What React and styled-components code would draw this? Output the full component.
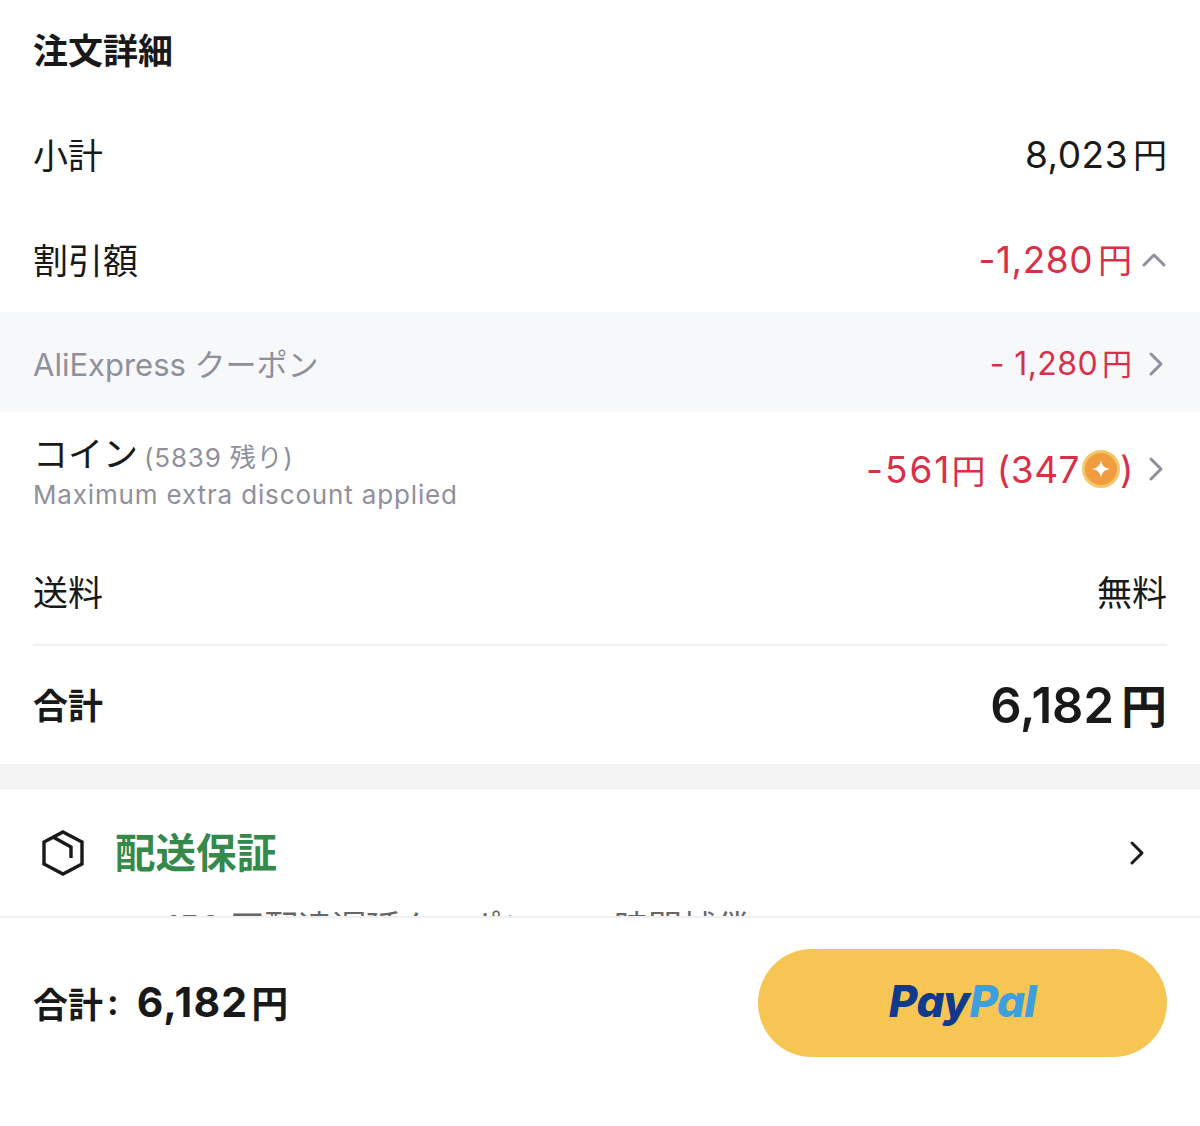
import React from "react";
import styled, { createGlobalStyle } from "styled-components";

const GlobalStyle = createGlobalStyle`
  html, body {
    margin: 0;
    padding: 0;
    background: #fff;
  }
  * {
    box-sizing: border-box;
  }
`;

const Page = styled.div`
  width: 1200px;
  height: 1126px;
  display: flex;
  flex-direction: column;
  overflow: hidden;
  background: #fff;
  color: #191919;
  font-family: Inter, "Noto Sans CJK JP", sans-serif;
`;
const Scroll = styled.div`
  height: 916px;
  overflow: hidden;
  flex: none;
`;
const Title = styled.h2`
  margin: 0;
  height: 103px;
  padding: 0 33px 6px;
  display: flex;
  align-items: center;
  font-size: 35px;
  font-weight: 700;
`;
const Row = styled.div`
  height: ${(p) => p.$h}px;
  padding: 0 33px 4px;
  display: flex;
  align-items: center;
  justify-content: space-between;
  font-size: 35px;
`;
const SubRow = styled(Row)`
  background: ${(p) => (p.$shaded ? "#f7f8fa" : "#fff")};
  color: #8f909c;
  font-size: 31px;
  padding-bottom: 0;
`;
const Value = styled.div`
  display: flex;
  align-items: center;
  gap: 9px;
  color: ${(p) => (p.$red ? "#d9304a" : "inherit")};
`;
const Digits = styled.span`
  font-size: 37px;
  letter-spacing: 0.5px;
`;
const SubDigits = styled.span`
  font-size: 32px;
  letter-spacing: 0.4px;
`;
const Yen = styled.span`
  font-size: ${(p) => p.$size || 34}px;
  margin-left: ${(p) => p.$gap ?? 5}px;
`;
const CoinAmount = styled.div`
  display: flex;
  align-items: center;
  font-size: 37px;
  letter-spacing: 0.5px;
`;
const CoinDigits = styled.span`
  letter-spacing: 2px;
`;
const CoinValue = styled(Value)`
  margin-bottom: 14px;
  gap: 7px;
`;
const Stack = styled.div`
  display: flex;
  flex-direction: column;
  margin-bottom: 7px;
`;
const CoinName = styled.div`
  color: #191919;
  font-size: 35px;
  line-height: 40px;
`;
const CoinLeft = styled.span`
  color: #8f909c;
  font-size: 26px;
  margin-left: 6px;
  letter-spacing: 0.8px;
`;
const Hint = styled.div`
  color: #8f909c;
  font-size: 26px;
  line-height: 34px;
  letter-spacing: 0.85px;
`;
const Coin = styled.span`
  display: inline-flex;
  align-items: center;
  justify-content: center;
  width: 38px;
  height: 38px;
  margin-left: 2px;
  border-radius: 50%;
  background: #f19c3f;
  border: 3px solid #f3c869;
`;
const Divider = styled.div`
  height: 2px;
  margin: 0 33px;
  background: #f0f0f0;
`;
const TotalRow = styled(Row)`
  font-weight: 700;
`;
const TotalLabel = styled.span`
  font-size: 35px;
`;
const TotalValue = styled.span`
  font-size: 49px;
  font-weight: 600;
`;
const Band = styled.div`
  height: 25px;
  background: #f4f4f4;
  border-bottom: 1px solid #eee;
`;
const Guarantee = styled.div`
  height: 119px;
  padding: 9px 52px 0 41px;
  display: flex;
  align-items: center;
  gap: 30px;
`;
const GuaranteeTitle = styled.span`
  flex: 1;
  padding-bottom: 6px;
  color: #34894b;
  font-size: 40.5px;
  font-weight: 700;
`;
const Clipped = styled.div`
  padding-left: 165px;
  font-size: 34px;
  line-height: 40px;
  color: #666;
  white-space: nowrap;
`;
const ClippedTail = styled.span`
  margin-left: 46px;
`;
const Footer = styled.div`
  flex: 1;
  border-top: 2px solid #f0f0f0;
  padding: 31px 33px 0;
  display: flex;
  align-items: flex-start;
  justify-content: space-between;
`;
const FooterTotal = styled.div`
  height: 106px;
  display: flex;
  align-items: center;
  font-size: 35px;
  font-weight: 700;
`;
const Colon = styled.span`
  margin-left: 4px;
`;
const FooterDigits = styled.span`
  font-size: 41px;
  margin-left: 18px;
  letter-spacing: 1.2px;
`;
const PayButton = styled.button`
  width: 409px;
  height: 108px;
  padding: 0 0 4px;
  border: none;
  border-radius: 54px;
  background: #f6c554;
  display: flex;
  align-items: center;
  justify-content: center;
  font-family: Inter, sans-serif;
  font-size: 44px;
  font-weight: 800;
  font-style: italic;
  letter-spacing: -0.7px;
`;
const PayDark = styled.span`
  color: #123a8c;
`;
const PayLight = styled.span`
  color: #3f9fdc;
`;
const ChevronSvg = styled.svg`
  margin-top: ${(p) => p.$drop}px;
  flex: none;
`;

const Chevron = ({ up, color = "#8f909c", drop = 3 }) => (
  <ChevronSvg $drop={drop} width="26" height="26" viewBox="0 0 26 26" fill="none" stroke={color} strokeWidth="3" strokeLinecap="round" strokeLinejoin="round">
    <path d={up ? "M3 18 L13 8 L23 18" : "M10 3 L20 13 L10 23"} />
  </ChevronSvg>
);

const BoxIcon = () => (
  <svg width="44" height="46" viewBox="0 0 44 46" fill="none" stroke="#191919" strokeWidth="3.4" strokeLinejoin="miter">
    <path d="M22 2 L41 12 V34 L22 44 L3 34 V12 Z" />
    <path d="M12 7 L30 17 V28" />
  </svg>
);

const Sparkle = () => (
  <svg width="20" height="20" viewBox="0 0 20 20" fill="#fff">
    <path d="M10 1 C10.8 6.5 13.5 9.2 19 10 C13.5 10.8 10.8 13.5 10 19 C9.2 13.5 6.5 10.8 1 10 C6.5 9.2 9.2 6.5 10 1 Z" />
  </svg>
);

export default function App() {
  return (
    <Page>
      <GlobalStyle />
      <Scroll>
        <Title>注文詳細</Title>
        <Row $h={105}>
          <span>小計</span>
          <Value>
            <span>
              <Digits>8,023</Digits>
              <Yen>円</Yen>
            </span>
          </Value>
        </Row>
        <Row $h={104}>
          <span>割引額</span>
          <Value $red>
            <span>
              <Digits>-1,280</Digits>
              <Yen>円</Yen>
            </span>
            <Chevron up />
          </Value>
        </Row>
        <SubRow $h={100} $shaded>
          <span>AliExpress クーポン</span>
          <Value $red>
            <span>
              <SubDigits>- 1,280</SubDigits>
              <Yen $size={30} $gap={4}>円</Yen>
            </span>
            <Chevron />
          </Value>
        </SubRow>
        <SubRow $h={128}>
          <Stack>
            <CoinName>
              コイン<CoinLeft>(5839 残り)</CoinLeft>
            </CoinName>
            <Hint>Maximum extra discount applied</Hint>
          </Stack>
          <CoinValue $red>
            <CoinAmount>
              <CoinDigits>-561</CoinDigits>
              <Yen $size={34} $gap={0}>円</Yen>&nbsp;(347
              <Coin>
                <Sparkle />
              </Coin>
              )
            </CoinAmount>
            <Chevron drop={0} />
          </CoinValue>
        </SubRow>
        <Row $h={104}>
          <span>送料</span>
          <Value>無料</Value>
        </Row>
        <Divider />
        <TotalRow $h={118}>
          <TotalLabel>合計</TotalLabel>
          <span>
            <TotalValue>6,182</TotalValue>
            <Yen $size={46} $gap={7}>円</Yen>
          </span>
        </TotalRow>
        <Band />
        <Guarantee>
          <BoxIcon />
          <GuaranteeTitle>配送保証</GuaranteeTitle>
          <Chevron color="#191919" drop={0} />
        </Guarantee>
        <Clipped>
          156 円配達遅延クーポン、<ClippedTail>時間補償</ClippedTail>
        </Clipped>
      </Scroll>
      <Footer>
        <FooterTotal>
          合計<Colon>:</Colon>
          <FooterDigits>6,182</FooterDigits>
          <Yen $size={37} $gap={3}>円</Yen>
        </FooterTotal>
        <PayButton>
          <PayDark>Pay</PayDark>
          <PayLight>Pal</PayLight>
        </PayButton>
      </Footer>
    </Page>
  );
}
